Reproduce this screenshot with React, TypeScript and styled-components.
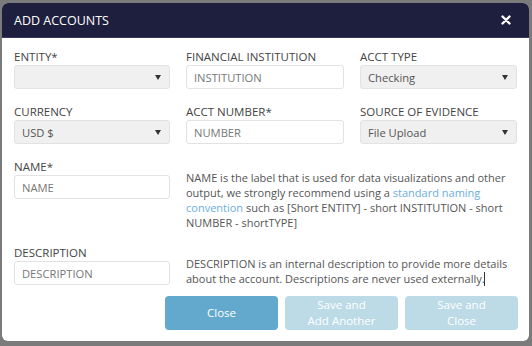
import styled, {createGlobalStyle} from "styled-components"

const GlobalStyle = createGlobalStyle`
    html, body {
        margin: 0;
        padding: 0;
        background: #7b7b7b;
        font-family: "Open Sans", "Liberation Sans", sans-serif;
    }
    * {
        box-sizing: border-box;
    }
`

const Backdrop = styled.div`
    width: 532px;
    height: 346px;
    padding: 3px 3px 5px 2px;
`

const Modal = styled.div`
    width: 527px;
    height: 338px;
    background: #ffffff;
    border-radius: 6px;
    overflow: hidden;
    display: flex;
    flex-direction: column;
`

const Header = styled.div`
    height: 35px;
    background: #1e1f3e;
    display: flex;
    align-items: center;
    justify-content: space-between;
    padding: 0 18px 0 12px;
    border-bottom: 1px solid #3a3b58;
`

const Title = styled.h1`
    margin: 0;
    font-size: 12.5px;
    font-weight: 400;
    color: #ffffff;
`

const CloseIcon = styled.button`
    border: none;
    background: none;
    padding: 0;
    display: flex;
    cursor: pointer;
`

const Body = styled.div`
    flex: 1;
    padding: 11px 11px 11px 12px;
    display: flex;
    flex-direction: column;
`

const Grid = styled.div`
    display: grid;
    grid-template-columns: 156px 158px 157px;
    column-gap: 16px;
    row-gap: 15px;
`

const Field = styled.div`
    display: flex;
    flex-direction: column;
`

const Label = styled.label`
    font-size: 11.5px;
    line-height: 16px;
    color: #444444;
`

const Box = styled.div<{filled?: boolean}>`
    height: 24px;
    border: 1px solid #e2e2e2;
    border-radius: 3px;
    background: ${(props) => (props.filled ? "#f0f0f0" : "#ffffff")};
    display: flex;
    align-items: center;
    justify-content: space-between;
    padding: 0 8px 0 7px;
    font-size: 11.2px;
    color: ${(props) => (props.filled ? "#555555" : "#777777")};
`

const Arrow = styled.span`
    width: 0;
    height: 0;
    border-left: 3.5px solid transparent;
    border-right: 3.5px solid transparent;
    border-top: 5px solid #333333;
`

const Help = styled.p`
    grid-column: span 2;
    margin: 0;
    padding-top: 11px;
    font-size: 11px;
    line-height: 15px;
    color: #555555;
`

const HelpLink = styled.a`
    color: #6aaee2;
    text-decoration: none;
`

const Caret = styled.span`
    display: inline-block;
    width: 1px;
    height: 14px;
    margin-left: -1px;
    background: #333333;
    vertical-align: -3px;
`

const Actions = styled.div`
    margin-top: auto;
    display: flex;
    justify-content: flex-end;
    gap: 7px;
`

const ActionButton = styled.button<{muted?: boolean}>`
    width: 113px;
    height: 34px;
    border: none;
    border-radius: 4px;
    background: ${(props) => (props.muted ? "#bcdbe7" : "#62a9cd")};
    color: #ffffff;
    font-family: inherit;
    font-size: 11.5px;
    line-height: 16px;
    cursor: pointer;
`

type FieldProps = {
    label: string
    value?: string
    select?: boolean
}

const FormField = ({label, value = "", select}: FieldProps) => (
    <Field>
        <Label>{label}</Label>
        <Box filled={select}>
            <span>{value}</span>
            {select && <Arrow />}
        </Box>
    </Field>
)

export default function App() {
    return (
        <Backdrop>
            <GlobalStyle />
            <Modal>
                <Header>
                    <Title>ADD ACCOUNTS</Title>
                    <CloseIcon>
                        <svg width="10" height="10" viewBox="0 0 10 10">
                            <path
                                d="M1.5 1.5 L8.5 8.5 M8.5 1.5 L1.5 8.5"
                                stroke="#ffffff"
                                strokeWidth="2.4"
                                strokeLinecap="round"
                            />
                        </svg>
                    </CloseIcon>
                </Header>
                <Body>
                    <Grid>
                        <FormField label="ENTITY*" select />
                        <FormField label="FINANCIAL INSTITUTION" value="INSTITUTION" />
                        <FormField label="ACCT TYPE" value="Checking" select />
                        <FormField label="CURRENCY" value="USD $" select />
                        <FormField label="ACCT NUMBER*" value="NUMBER" />
                        <FormField label="SOURCE OF EVIDENCE" value="File Upload" select />
                        <FormField label="NAME*" value="NAME" />
                        <Help>
                            NAME is the label that is used for data visualizations and other
                            output, we strongly recommend using a{" "}
                            <HelpLink href="#">standard naming convention</HelpLink> such as
                            [Short ENTITY] - short INSTITUTION - short NUMBER - shortTYPE]
                        </Help>
                        <FormField label="DESCRIPTION" value="DESCRIPTION" />
                        <Help>
                            DESCRIPTION is an internal description to provide more details
                            about the account. Descriptions are never used externally.
                            <Caret />
                        </Help>
                    </Grid>
                    <Actions>
                        <ActionButton>Close</ActionButton>
                        <ActionButton muted>
                            Save and
                            <br />
                            Add Another
                        </ActionButton>
                        <ActionButton muted>
                            Save and
                            <br />
                            Close
                        </ActionButton>
                    </Actions>
                </Body>
            </Modal>
        </Backdrop>
    )
}
